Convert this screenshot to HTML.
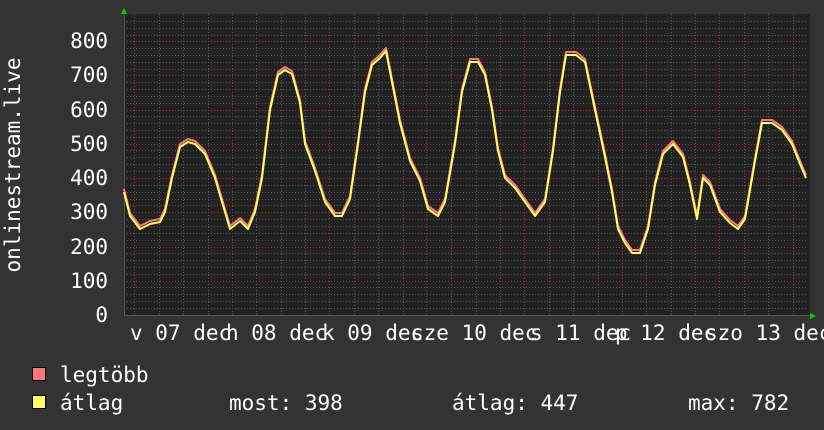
<!DOCTYPE html>
<html><head><meta charset="utf-8"><style>
html,body{margin:0;padding:0;background:#333;}
svg{display:block}
text{font-family:"DejaVu Sans Mono","Liberation Mono",monospace;fill:#fff;font-size:21px}
</style></head><body>
<svg width="824" height="430" viewBox="0 0 824 430" xmlns="http://www.w3.org/2000/svg">
<rect width="824" height="430" fill="#333"/>
<rect x="124" y="14" width="686" height="302" fill="#222"/>
<g id="minor" stroke="#555" stroke-width="1" stroke-dasharray="1,2">
<path d="M124 21.5H808M124 28.5H808M124 35.5H808M124 48.5H808M124 55.5H808M124 62.5H808M124 69.5H808M124 82.5H808M124 89.5H808M124 96.5H808M124 103.5H808M124 116.5H808M124 123.5H808M124 130.5H808M124 137.5H808M124 150.5H808M124 157.5H808M124 164.5H808M124 171.5H808M124 185.5H808M124 192.5H808M124 199.5H808M124 205.5H808M124 219.5H808M124 226.5H808M124 233.5H808M124 240.5H808M124 253.5H808M124 260.5H808M124 267.5H808M124 274.5H808M124 287.5H808M124 294.5H808M124 301.5H808M124 308.5H808"/>
<path d="M159.5 14V316M183.5 14V316M208.5 14V316M256.5 14V316M281.5 14V316M305.5 14V316M354.5 14V316M378.5 14V316M403.5 14V316M451.5 14V316M476.5 14V316M500.5 14V316M549.5 14V316M573.5 14V316M598.5 14V316M646.5 14V316M671.5 14V316M695.5 14V316M744.5 14V316M768.5 14V316M793.5 14V316"/>
</g>
<g stroke="#8a3a3a" stroke-width="1" stroke-dasharray="1,2">
<path d="M124 41.5H808M124 75.5H808M124 110.5H808M124 144.5H808M124 178.5H808M124 212.5H808M124 247.5H808M124 281.5H808"/>
<path d="M134.5 14V316M232.5 14V316M329.5 14V316M426.5 14V316M524.5 14V316M622.5 14V316M719.5 14V316"/>
</g>
<path d="M124 315.5H810M124.5 14V316" stroke="#555" stroke-width="1"/>
<polygon points="121,14 127,14 124,8" fill="#0c0"/>
<polygon points="810,313 810,319 816,316" fill="#0c0"/>
<g fill="none" stroke-width="2" stroke-linejoin="round">
<polyline id="d" stroke="#ff7777" transform="translate(0,-3)" points="124,192 130,216 140,229 150,224 160,222 165,212 172,178 180,147 188,142 195,144 205,154 215,178 222,202 230,229 240,221 248,229 255,212 262,178 270,110 278,75 285,70 292,74 300,103 305,144 315,171 325,202 335,216 342,216 350,199 358,144 365,92 372,65 380,58 386,51 392,82 400,123 410,161 420,181 428,209 438,216 445,202 455,144 462,92 470,62 478,62 485,75 492,110 498,151 505,178 515,188 525,202 535,216 545,202 553,151 560,92 566,55 576,55 585,62 595,110 605,157 612,192 618,229 625,243 632,253 640,253 648,229 655,185 663,154 673,144 683,157 690,185 697,219 703,178 710,185 720,212 730,223 738,229 745,219 755,161 762,123 772,123 782,130 792,144 800,164 806,178"/>
<polyline stroke="#ffff66" points="124,192 130,216 140,229 150,224 160,222 165,212 172,178 180,147 188,142 195,144 205,154 215,178 222,202 230,229 240,221 248,229 255,212 262,178 270,110 278,75 285,70 292,74 300,103 305,144 315,171 325,202 335,216 342,216 350,199 358,144 365,92 372,65 380,58 386,51 392,82 400,123 410,161 420,181 428,209 438,216 445,202 455,144 462,92 470,62 478,62 485,75 492,110 498,151 505,178 515,188 525,202 535,216 545,202 553,151 560,92 566,55 576,55 585,62 595,110 605,157 612,192 618,229 625,243 632,253 640,253 648,229 655,185 663,154 673,144 683,157 690,185 697,219 703,178 710,185 720,212 730,223 738,229 745,219 755,161 762,123 772,123 782,130 792,144 800,164 806,178"/>
</g>
<g text-anchor="end">
<text x="108" y="48">800</text><text x="108" y="82">700</text><text x="108" y="117">600</text><text x="108" y="151">500</text><text x="108" y="185">400</text><text x="108" y="219">300</text><text x="108" y="254">200</text><text x="108" y="288">100</text><text x="108" y="322">0</text>
</g>
<text transform="translate(20,165) rotate(-90)" text-anchor="middle">onlinestream.live</text>
<text x="130" y="340">v 07 dec</text>
<text x="226" y="340">h 08 dec</text>
<text x="322" y="340">k 09 dec</text>
<text x="411" y="340">sze 10 dec</text>
<text x="530" y="340">s 11 dec</text>
<text x="615" y="340">p 12 dec</text>
<text x="705" y="340">szo 13 dec</text>
<rect x="32.5" y="367.5" width="13" height="13" fill="#ff7777" stroke="#000"/>
<rect x="32.5" y="395.5" width="13" height="13" fill="#ffff66" stroke="#000"/>
<text x="60" y="382">legtöbb</text>
<text x="60" y="410">átlag</text>
<text x="229" y="410">most: 398</text>
<text x="452" y="410">átlag: 447</text>
<text x="688" y="410">max: 782</text>
</svg>
</body></html>
